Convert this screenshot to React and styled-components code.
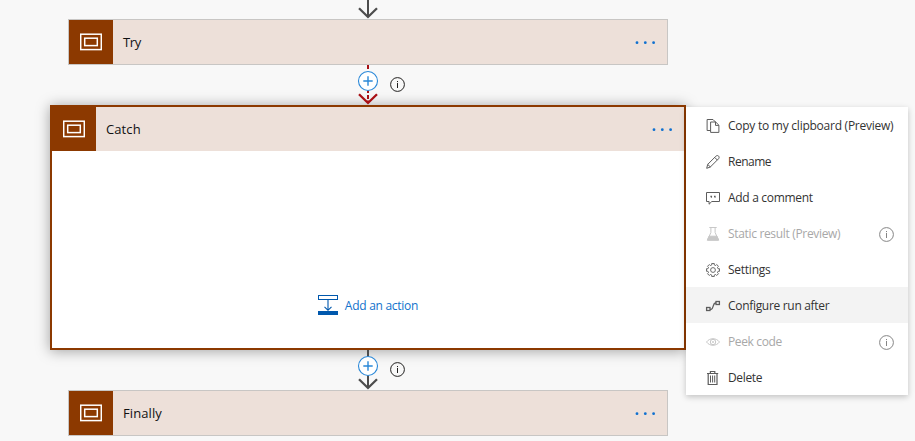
import React from "react";
import styled, { createGlobalStyle, css } from "styled-components";

const GlobalStyle = createGlobalStyle`
  * { box-sizing: border-box; }
  body {
    margin: 0;
    background: #f8f8f8;
    font-family: "Open Sans", "Noto Sans", sans-serif;
    overflow: hidden;
  }
  svg { display: block; flex: none; }
`;

const Canvas = styled.main`
  position: relative;
  width: 915px;
  height: 441px;
  overflow: hidden;
  background: #f8f8f8;
`;

const Flow = styled.div`
  display: flex;
  flex-direction: column;
  align-items: center;
  width: 736px;
`;

const Card = styled.section`
  width: 600px;
  border: 1px solid #c8c6c4;
  background: #ede0d9;
  ${(p) =>
    p.$selected &&
    css`
      width: 636px;
      height: 245px;
      border: 2px solid #8c3900;
      background: #fff;
      box-shadow: 0 1px 13px rgba(0, 0, 0, 0.36);
    `}
`;

const CardHeader = styled.header`
  display: flex;
  align-items: center;
  height: 44px;
  padding-right: 10px;
  background: #ede0d9;
`;

const CardIcon = styled.div`
  display: flex;
  align-items: center;
  justify-content: center;
  width: 44px;
  height: 44px;
  background: #8c3900;
`;

const CardTitle = styled.h2`
  flex: 1;
  margin: 0;
  padding-left: 10px;
  font-size: 13px;
  font-weight: 400;
  line-height: 18px;
  letter-spacing: ${(p) => p.$spacing || 0}px;
  color: #111;
`;

const CardBody = styled.div`
  display: flex;
  justify-content: center;
  padding-top: 144px;
`;

const AddAction = styled.a`
  display: flex;
  align-items: center;
  gap: 7px;
  height: 20px;
  color: #1272cc;
  font-size: 12px;
  letter-spacing: -0.27px;
  white-space: nowrap;
`;

const ConnectorRow = styled.div`
  display: flex;
  position: relative;
  z-index: 1;
  width: 76px;
  height: ${(p) => p.$height}px;
  padding-left: 26px;
`;

const InfoSlot = styled.div`
  padding-top: 12px;
  margin-left: 10px;
`;

const Menu = styled.ul`
  position: absolute;
  z-index: 2;
  left: 686px;
  top: 107px;
  width: 222px;
  margin: 0;
  padding: 0;
  list-style: none;
  background: #fff;
  box-shadow: 0 2px 6px rgba(0, 0, 0, 0.22);
`;

const MenuItem = styled.li`
  display: flex;
  align-items: center;
  height: 36px;
  padding: 2px 14px 0 19px;
  background: ${(p) => (p.$active ? "#f3f3f3" : "transparent")};
  color: ${(p) => (p.$disabled ? "#a8a8a8" : "#333")};
`;

const MenuLabel = styled.span`
  flex: 1;
  padding-left: 7px;
  font-size: 12px;
  line-height: 18px;
  letter-spacing: ${(p) => p.$spacing}px;
  white-space: nowrap;
`;

const MenuIcon = styled.svg.attrs({ width: 16, height: 16, viewBox: "0 0 16 16" })`
  fill: none;
  stroke: ${(p) => (p.$disabled ? "#c8c8c8" : "#5c5c5c")};
  stroke-width: 1;
`;

const ScopeIcon = () => (
  <svg width="22" height="18" viewBox="0 0 22 18" fill="none" stroke="#fff">
    <rect x="0.7" y="1.2" width="20.6" height="15.4" strokeWidth="1.5" />
    <rect x="4.7" y="5.2" width="12.6" height="7.4" strokeWidth="1.5" />
  </svg>
);

const Dots = () => (
  <svg width="22" height="6" viewBox="0 0 22 6" fill="#0f70d0">
    <circle cx="2" cy="3.7" r="1.4" />
    <circle cx="10.3" cy="3.7" r="1.4" />
    <circle cx="18.6" cy="3.7" r="1.4" />
  </svg>
);

const Info = ({ color = "#201f1e" }) => (
  <svg width="15" height="15" viewBox="0 0 15 15" fill="none" stroke={color}>
    <circle cx="7.5" cy="7.5" r="6.9" />
    <path d="M7.5 6v5M7.5 4v1.1" />
  </svg>
);

const Plus = () => (
  <>
    <circle cx="12" cy="16" r="9.5" fill="#fff" stroke="#2a88d8" strokeWidth="1.1" />
    <path d="M7.3 16h9.4M12 11.3v9.4" stroke="#2a88d8" strokeWidth="1.4" />
  </>
);

const Connector = ({ failed }) => {
  const color = failed ? "#a80f14" : "#4d4d4d";
  return (
    <ConnectorRow $height={40}>
      <svg width="24" height="40" viewBox="0 0 24 40" fill="none" stroke={color} strokeWidth="2">
        {failed ? <path d="M12 0v4M12 24v4M12 30v4M12 35.5v2.5" /> : <path d="M12 0v38" />}
        <path d="M3 29.2l9 8.8 9-8.8" strokeWidth="2.3" />
        <Plus />
      </svg>
      <InfoSlot>
        <Info />
      </InfoSlot>
    </ConnectorRow>
  );
};

const ScopeCard = ({ title, spacing, selected, children }) => (
  <Card $selected={selected}>
    <CardHeader>
      <CardIcon>
        <ScopeIcon />
      </CardIcon>
      <CardTitle $spacing={spacing}>{title}</CardTitle>
      <Dots />
    </CardHeader>
    {children}
  </Card>
);

const gearPath = (() => {
  const points = [];
  for (let i = 0; i < 8; i++) {
    const base = (i * Math.PI) / 4;
    [[-0.24, 5.2], [-0.2, 6.6], [0.2, 6.6], [0.24, 5.2]].forEach(([a, r]) => {
      points.push(`${(8 + r * Math.sin(base + a)).toFixed(2)} ${(8 - r * Math.cos(base + a)).toFixed(2)}`);
    });
  }
  return `M${points.join("L")}Z`;
})();

const items = [
  {
    label: "Copy to my clipboard (Preview)",
    spacing: -0.25,
    icon: (
      <>
        <path d="M5.5 12.5H2.1V1.5H8l2.5 2.5" />
        <path d="M5.6 4h5.1l3.2 3.2v7.2H5.6z" />
        <path d="M10.5 4v3.4h3.4" />
      </>
    ),
  },
  {
    label: "Rename",
    spacing: -0.5,
    icon: (
      <>
        <path d="M1.7 14.3l1-3.9 8.2-8.2c.9-.9 2-.8 2.7-.1s.7 1.9-.1 2.7l-8.2 8.2z" />
        <path d="M9.7 3.4l2.7 2.7M2.7 10.4l2.8 2.7" />
      </>
    ),
  },
  {
    label: "Add a comment",
    spacing: -0.3,
    icon: (
      <>
        <path d="M1.5 2.5h13v9H6.8l-2.7 2.7v-2.7H1.5z" />
        <path d="M5.4 6.5h1.6M9 6.5h1.6" strokeWidth="1.6" />
        <path d="M6.8 6.8l-.5 1.2M10.4 6.8l-.5 1.2" strokeWidth="0.6" />
      </>
    ),
  },
  {
    label: "Static result (Preview)",
    spacing: -0.33,
    disabled: true,
    icon: (
      <>
        <path d="M4.3 1.5h7.4M5.9 1.5v5L2.5 14h11l-3.4-7.5v-5" />
        <path d="M4 10.2h8l1.7 4H2.3z" fill="#c8c8c8" />
      </>
    ),
  },
  {
    label: "Settings",
    spacing: -0.25,
    icon: (
      <>
        <path d={gearPath} strokeWidth="0.9" strokeLinejoin="round" />
        <circle cx="8" cy="8" r="2.4" strokeWidth="0.9" />
      </>
    ),
  },
  {
    label: "Configure run after",
    spacing: -0.31,
    active: true,
    icon: (
      <>
        <rect x="1.6" y="9.5" width="3.4" height="3" strokeWidth="1.3" />
        <rect x="11" y="3.5" width="3.4" height="3" strokeWidth="1.3" />
        <path d="M5 11.4h1.2c2.4-.4 1.6-6 4-6.4H11" strokeWidth="1.3" />
      </>
    ),
  },
  {
    label: "Peek code",
    spacing: -0.36,
    disabled: true,
    icon: (
      <>
        <path d="M1.5 8c3.3-4.4 9.7-4.4 13 0-3.3 4.4-9.7 4.4-13 0z" />
        <circle cx="8" cy="8" r="2.7" />
        <circle cx="8" cy="8" r="0.6" />
      </>
    ),
  },
  {
    label: "Delete",
    spacing: -0.35,
    icon: (
      <>
        <path d="M2 3.5h11.2M5.4 3.3V1.5h4.4v1.8M3.2 3.5v11H12v-11" strokeWidth="1.2" />
        <path d="M5.5 5.5v7M7.6 5.5v7M9.7 5.5v7" />
      </>
    ),
  },
];

export default function App() {
  return (
    <Canvas>
      <GlobalStyle />
      <Flow>
        <ConnectorRow $height={19}>
          <svg width="24" height="19" viewBox="0 0 24 19" fill="none" stroke="#4d4d4d">
            <path d="M12 0v17" strokeWidth="2" />
            <path d="M3 8.2l9 8.8 9-8.8" strokeWidth="2.3" />
          </svg>
        </ConnectorRow>
        <ScopeCard title="Try" spacing={-0.3} />
        <Connector failed />
        <ScopeCard title="Catch" spacing={0.1} selected>
          <CardBody>
            <AddAction>
              <svg width="20" height="20" viewBox="0 0 20 20" fill="none" stroke="#0058ad">
                <rect x="0.5" y="0.5" width="19" height="4" />
                <path d="M10 5v10M6.5 11.8L10 15.3l3.5-3.5" strokeWidth="1.1" />
                <path d="M0 18h20" strokeWidth="4" />
              </svg>
              Add an action
            </AddAction>
          </CardBody>
        </ScopeCard>
        <Connector />
        <ScopeCard title="Finally" spacing={0.1} />
      </Flow>
      <Menu>
        {items.map((item) => (
          <MenuItem key={item.label} $active={item.active} $disabled={item.disabled}>
            <MenuIcon $disabled={item.disabled}>{item.icon}</MenuIcon>
            <MenuLabel $spacing={item.spacing}>{item.label}</MenuLabel>
            {item.disabled && <Info color="#858585" />}
          </MenuItem>
        ))}
      </Menu>
    </Canvas>
  );
}
